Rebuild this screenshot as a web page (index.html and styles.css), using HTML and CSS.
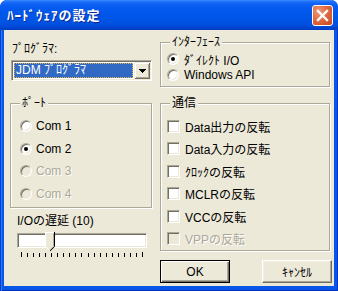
FILE: index.html
```html
<!DOCTYPE html>
<html lang="ja">
<head>
<meta charset="UTF-8" />
<title>ﾊｰﾄﾞｳｪｱの設定</title>
<link rel="stylesheet" href="styles.css">
</head>
<body>

<div class="window">
  <div class="titlebar">
    <span class="title">ﾊｰﾄﾞｳｪｱの設定</span>
    <button type="button" class="close" aria-label="閉じる">
      <svg width="19" height="19" viewBox="0 0 19 19"><path d="M5 5L14 14M14 5L5 14" stroke="#fff" stroke-width="2.4" stroke-linecap="square"/></svg>
    </button>
  </div>

  <div class="frame">
    <div class="client">

      <!-- left column -->
      <div class="col-left">
        <div class="field-label">ﾌﾟﾛｸﾞﾗﾏ:</div>
        <div class="combo">
          <div class="combo-value"><span class="sel">JDM ﾌﾟﾛｸﾞﾗﾏ</span></div>
          <div class="combo-btn">
            <svg width="7" height="4" viewBox="0 0 7 4"><path d="M0 0h7v1H0zM1 1h5v1H1zM2 2h3v1H2zM3 3h1v1H3z" fill="#000"/></svg>
          </div>
        </div>

        <div class="group port">
          <span class="group-title">ﾎﾟｰﾄ</span>
          <label class="opt"><span class="radio"></span>Com 1</label>
          <label class="opt"><span class="radio checked"></span>Com 2</label>
          <label class="opt disabled"><span class="radio"></span>Com 3</label>
          <label class="opt disabled"><span class="radio"></span>Com 4</label>
        </div>

        <div class="field-label delay">I/Oの遅延 (10)</div>
        <div class="slider">
          <div class="track"></div>
          <svg class="thumb" width="10" height="20" viewBox="0 0 10 20">
            <path d="M0.5 0.5H9.5V14.5L5 19L0.5 14.5Z" fill="#ECE9D8"/>
            <path d="M0.5 14.5V0.5H9" fill="none" stroke="#fff"/>
            <path d="M1 15L4.5 18.5" fill="none" stroke="#fff"/>
            <path d="M8.5 1.5V14.3L4.8 18" fill="none" stroke="#ACA899"/>
            <path d="M9.5 0V14.6L5 19.1" fill="none" stroke="#000"/>
          </svg>
          <div class="ticks" id="ticks"></div>
        </div>
      </div>

      <!-- right column -->
      <div class="col-right">
        <div class="group iface">
          <span class="group-title">ｲﾝﾀｰﾌｪｰｽ</span>
          <label class="opt"><span class="radio checked"></span>ﾀﾞｲﾚｸﾄ I/O</label>
          <label class="opt"><span class="radio"></span>Windows API</label>
        </div>

        <div class="group comm">
          <span class="group-title">通信</span>
          <label class="opt"><span class="check"></span>Data出力の反転</label>
          <label class="opt"><span class="check"></span>Data入力の反転</label>
          <label class="opt"><span class="check"></span>ｸﾛｯｸの反転</label>
          <label class="opt"><span class="check"></span>MCLRの反転</label>
          <label class="opt"><span class="check"></span>VCCの反転</label>
          <label class="opt disabled"><span class="check"></span>VPPの反転</label>
        </div>

        <div class="buttons">
          <button type="button" class="btn default">OK</button>
          <button type="button" class="btn">ｷｬﾝｾﾙ</button>
        </div>
      </div>

    </div>
  </div>
</div>

<script>
  // slider tick marks
  const ticks = document.getElementById('ticks');
  for (let i = 0; i < 21; i++) {
    const t = document.createElement('span');
    ticks.appendChild(t);
  }
</script>

</body>
</html>
```

FILE: styles.css
```css
* {
  box-sizing: border-box;
}
html, body {
  margin: 0;
  padding: 0;
  background: #fff;
}
body {
  font-family: "Liberation Sans", "Noto Sans CJK JP", sans-serif;
  font-size: 12px;
  color: #000;
}
.window {
  width: 338px;
  height: 291px;
  display: flex;
  flex-direction: column;
  border-radius: 7px 7px 0 0;
  overflow: hidden;
  background: #0756E8;
}
.titlebar {
  height: 30px;
  flex: none;
  display: flex;
  align-items: flex-start;
  justify-content: space-between;
  padding: 0 5px 0 7px;
  background: linear-gradient(to bottom, #3B8CFF 0, #1A6CF8 2px, #0A5EF2 5px, #0057EB 12px, #0055E6 20px, #004FDF 25px, #0043CD 28px, #003DC4 30px);
}
.title {
  margin-top: 9px;
  line-height: 14px;
  font-size: 13px;
  font-weight: bold;
  letter-spacing: 1px;
  color: #fff;
  text-shadow: 1px 1px 0 #0C2A95;
}
.close {
  margin-top: 5px;
  width: 21px;
  height: 21px;
  padding: 0;
  border: 1px solid #fff;
  border-radius: 3px;
  background: radial-gradient(circle at 30% 30%, #EE9A78 0, #E26A40 45%, #C9441B 100%);
  display: flex;
  align-items: center;
  justify-content: center;
}
.close svg {
  display: block;
}
.frame {
  flex: 1;
  padding: 0 4px 5px;
  background: #0756E8;
  box-shadow: inset 1px 0 #0A3ED0, inset 2px 0 #2A78F5, inset -1px 0 #0634C8, inset 0 -1px #0030B8;
}
.client {
  height: 256px;
  background: #ECE9D8;
  display: flex;
  gap: 8px;
  padding-left: 6px;
}
.col-left {
  width: 142px;
  display: flex;
  flex-direction: column;
}
.col-right {
  width: 170px;
  display: flex;
  flex-direction: column;
}
.field-label {
  line-height: 16px;
  margin-top: 11px;
  padding-left: 2px;
  white-space: nowrap;
}
.field-label.delay {
  margin-top: 5px;
  padding-left: 7px;
}

/* combo box */
.combo {
  margin: 3px 0 0 1px;
  width: 141px;
  height: 21px;
  display: flex;
  background: #fff;
  border: 1px solid;
  border-color: #ACA899 #fff #fff #ACA899;
  box-shadow: inset 1px 1px #716F64, inset -1px -1px #ECE9D8;
  padding: 1px;
}
.combo-value {
  flex: 1;
  padding: 1px;
  display: flex;
}
.combo-value .sel {
  flex: 1;
  background: #316AC5;
  color: #fff;
  border: 1px dotted #E3B54A;
  line-height: 13px;
  padding-left: 1px;
  white-space: nowrap;
}
.combo-btn {
  width: 16px;
  background: #ECE9D8;
  display: flex;
  align-items: center;
  justify-content: center;
  box-shadow: inset 1px 1px #F1EFE2, inset -1px -1px #716F64, inset 2px 2px #fff, inset -2px -2px #ACA899;
}
.combo-btn svg {
  display: block;
}

/* group boxes */
.group {
  position: relative;
  border: 1px solid #ACA899;
  box-shadow: 1px 1px 0 #fff, inset 1px 1px 0 #fff;
}
.group-title {
  position: absolute;
  top: -8px;
  left: 9px;
  padding: 0 2px;
  line-height: 14px;
  background: #ECE9D8;
  white-space: nowrap;
}
.port {
  margin-top: 22px;
  height: 105px;
  padding: 11px 0 0 9px;
}
.iface {
  margin-top: 12px;
  height: 45px;
  padding: 8px 0 0 6px;
}
.comm {
  margin-top: 16px;
  height: 148px;
  padding: 11px 0 0 6px;
}

/* radio / check rows */
.opt {
  display: flex;
  align-items: center;
  gap: 4px;
  height: 22px;
  white-space: nowrap;
}
.opt:nth-of-type(even) {
  height: 23px;
}
.iface .opt {
  height: 16px;
  gap: 5px;
}
.comm .opt {
  gap: 5px;
}
.opt.disabled {
  color: #ACA899;
  text-shadow: 1px 1px 0 #fff;
}
.radio {
  flex: none;
  position: relative;
  width: 12px;
  height: 12px;
  border-radius: 50%;
  background: #fff;
  border: 1px solid;
  border-color: #ACA899 #fff #fff #ACA899;
  box-shadow: inset 1px 1px #716F64, inset -1px -1px #ECE9D8;
}
.radio.checked::after {
  content: "";
  position: absolute;
  left: 3px;
  top: 3px;
  width: 4px;
  height: 4px;
  border-radius: 50%;
  background: #000;
}
.disabled .radio,
.disabled .check {
  background: #ECE9D8;
}
.check {
  flex: none;
  width: 13px;
  height: 13px;
  background: #fff;
  border: 1px solid;
  border-color: #ACA899 #fff #fff #ACA899;
  box-shadow: inset 1px 1px #716F64, inset -1px -1px #ECE9D8;
}

/* slider */
.slider {
  position: relative;
  margin: 4px 0 0 7px;
  width: 130px;
}
.track {
  height: 15px;
  background: #fff;
  border: 1px solid;
  border-color: #ACA899 #fff #fff #ACA899;
  box-shadow: inset 1px 1px #716F64, inset -1px -1px #ECE9D8;
}
.thumb {
  position: absolute;
  left: 28px;
  top: -1px;
  display: block;
}
.ticks {
  display: flex;
  justify-content: space-between;
  margin: 4px 4px 0;
  height: 5px;
}
.ticks span {
  width: 1px;
  height: 4px;
  margin-top: 1px;
  background: #000;
}
.ticks span:first-child,
.ticks span:last-child {
  height: 5px;
  margin-top: 0;
}

/* buttons */
.buttons {
  margin-top: 9px;
  width: 172px;
  display: flex;
  justify-content: space-between;
}
.btn {
  width: 70px;
  height: 23px;
  padding: 0;
  font: inherit;
  color: #000;
  background: #ECE9D8;
  border: 1px solid;
  border-color: #fff #716F64 #716F64 #fff;
  box-shadow: inset -1px -1px #ACA899, inset 1px 1px #F1EFE2;
}
.btn.default {
  border: 1px solid #000;
  box-shadow: inset 1px 1px #fff, inset -1px -1px #716F64, inset -2px -2px #ACA899;
}
```
